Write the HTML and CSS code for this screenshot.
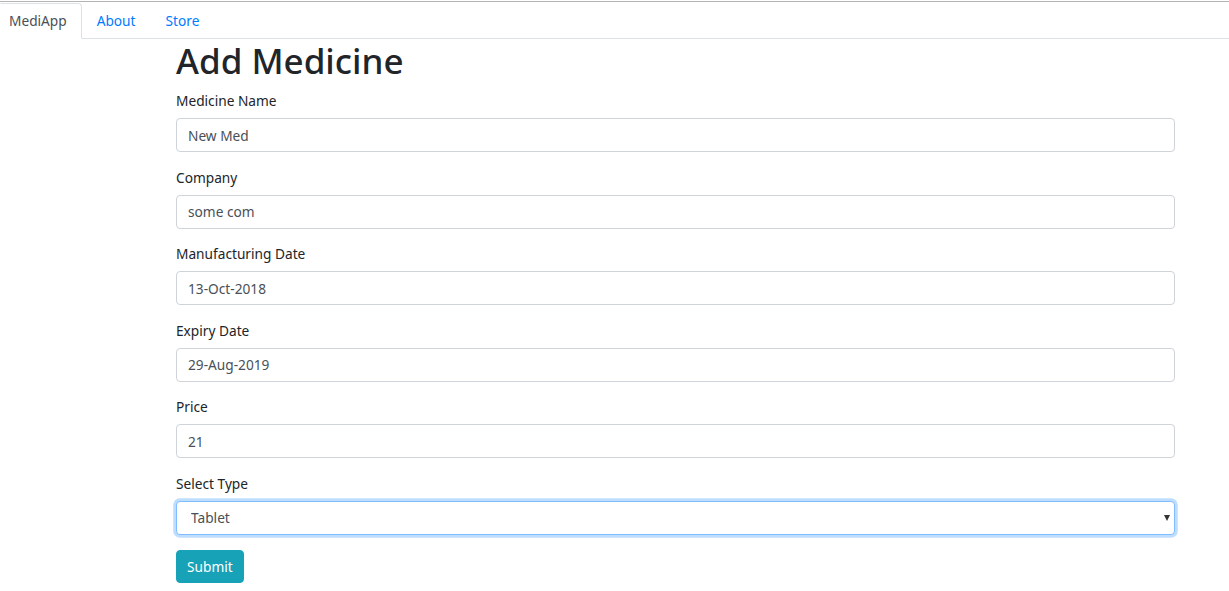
FILE: index.html
```html
<!DOCTYPE html>
<html lang="en">
<head>
<meta charset="utf-8">
<title>MediApp</title>
<link rel="stylesheet" href="styles.css">
</head>
<body>
<div class="topline"></div>
<ul class="nav-tabs">
  <li><a class="nav-link active" href="#">MediApp</a></li>
  <li><a class="nav-link" href="#">About</a></li>
  <li><a class="nav-link" href="#">Store</a></li>
</ul>
<main class="container">
  <h1 class="title">Add Medicine</h1>
  <form class="med-form">
    <div class="form-group">
      <label class="label">Medicine Name</label>
      <input class="form-control" type="text" value="New Med">
    </div>
    <div class="form-group">
      <label class="label">Company</label>
      <input class="form-control" type="text" value="some com">
    </div>
    <div class="form-group">
      <label class="label">Manufacturing Date</label>
      <input class="form-control" type="text" value="13-Oct-2018">
    </div>
    <div class="form-group">
      <label class="label">Expiry Date</label>
      <input class="form-control" type="text" value="29-Aug-2019">
    </div>
    <div class="form-group">
      <label class="label">Price</label>
      <input class="form-control" type="text" value="21">
    </div>
    <div class="form-group">
      <label class="label">Select Type</label>
      <div class="select-wrap">
        <select class="form-control select focused">
          <option>Tablet</option>
          <option>Syrup</option>
          <option>Capsule</option>
        </select>
      </div>
    </div>
    <button class="btn-info" type="button">Submit</button>
  </form>
</main>
</body>
</html>
```

FILE: styles.css
```css
* { box-sizing: border-box; }
html, body {
  margin: 0;
  padding: 0;
  background: #fff;
}
body {
  font-family: "Noto Sans", "Open Sans", sans-serif;
  font-size: 13.7px;
  line-height: 21px;
  color: #212529;
}
.topline {
  margin-top: 1px;
  height: 1px;
  background: #b4b4b4;
}
.nav-tabs {
  list-style: none;
  margin: 1px 0 0 0;
  padding: 0;
  display: flex;
  border-bottom: 1px solid #dee2e6;
}
.nav-tabs li {
  margin-bottom: -1px;
}
.nav-link {
  display: block;
  padding: 7px 14px;
  line-height: 20px;
  border: 1px solid transparent;
  border-top-left-radius: 4px;
  border-top-right-radius: 4px;
  color: #007bff;
  text-decoration: none;
}
.nav-link.active {
  color: #495057;
  background: #fff;
  border-color: #dee2e6 #dee2e6 #fff;
  border-left-color: transparent;
  padding-left: 8px;
  border-top-left-radius: 0;
}
.container {
  margin-left: 176px;
  width: 999px;
}
.title {
  margin: 1px 0 8px 0;
  font-size: 35px;
  line-height: 42px;
  font-weight: 500;
  color: #212529;
}
.form-group {
  margin-bottom: 14.6px;
}
.label {
  display: block;
  margin-bottom: 7px;
}
.form-control {
  display: block;
  width: 100%;
  height: 34px;
  padding: 6px 11px;
  font-family: inherit;
  font-size: 13.7px;
  line-height: 20px;
  color: #495057;
  background: #fff;
  border: 1px solid #ced4da;
  border-radius: 4px;
  outline: none;
}
.select-wrap {
  position: relative;
}
.select-wrap::after {
  content: "";
  position: absolute;
  right: 5px;
  top: 14px;
  border-left: 3.5px solid transparent;
  border-right: 3.5px solid transparent;
  border-top: 6px solid #333;
  pointer-events: none;
}
.select {
  -webkit-appearance: none;
  appearance: none;
  padding-left: 14px;
}
.select.focused {
  border-color: #80bdff;
  box-shadow: 0 0 0 2.8px rgba(0, 123, 255, .25);
}
.btn-info {
  display: inline-block;
  height: 33px;
  padding: 6px 10px;
  font-family: inherit;
  font-size: 13.7px;
  line-height: 19px;
  color: #fff;
  background: #17a2b8;
  border: 1px solid #17a2b8;
  border-radius: 4px;
}
```
